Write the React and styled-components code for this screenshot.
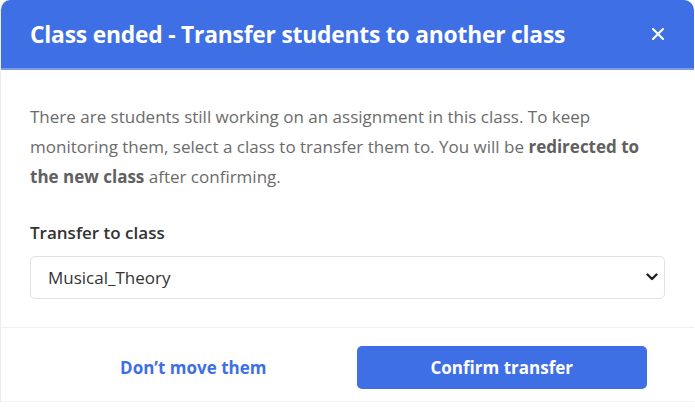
import styled, { createGlobalStyle } from "styled-components";

const GlobalStyle = createGlobalStyle`
  html, body {
    margin: 0;
    padding: 0;
    background: #ffffff;
  }
  body {
    font-family: "Open Sans", "Noto Sans", Arial, sans-serif;
  }
`;

const colors = {
  primary: "#3f6fe4",
  primaryLight: "#7b9cec",
  text: "#6b6b6b",
  dark: "#333333",
  border: "#e2e2e2",
  divider: "#efefef",
};

const Modal = styled.div`
  width: 693px;
  border-radius: 10px 10px 0 0;
  overflow: hidden;
  border-left: 1px solid #ececec;
  border-bottom: 1px solid #f4f4f4;
  background: #fff;
`;

const Header = styled.header`
  height: 68px;
  background: ${colors.primary};
  border-bottom: 2px solid ${colors.primaryLight};
  padding: 0 29px 0 29px;
  display: flex;
  align-items: center;
  justify-content: space-between;
`;

const Title = styled.h2`
  margin: 0;
  color: #fff;
  font-size: 22.8px;
  font-weight: 700;
  letter-spacing: -0.2px;
`;

const Close = styled.button`
  background: none;
  border: 0;
  padding: 0;
  width: 14px;
  height: 14px;
  display: flex;
  align-items: center;
  justify-content: center;
  cursor: pointer;
`;

const Body = styled.div`
  padding: 32px 29px 28px 29px;
`;

const Text = styled.p`
  margin: 0;
  font-size: 17px;
  line-height: 30px;
  color: ${colors.text};

  strong {
    font-weight: 700;
    color: #606060;
  }
`;

const Label = styled.label`
  display: block;
  margin-top: 29px;
  font-size: 17px;
  line-height: 24px;
  font-weight: 600;
  color: ${colors.dark};
`;

const SelectWrap = styled.div`
  position: relative;
  margin-top: 11px;
`;

const Select = styled.select`
  appearance: none;
  width: 100%;
  height: 43px;
  border: 1.5px solid ${colors.border};
  border-radius: 5px;
  background: #fff;
  padding: 0 30px 0 17px;
  font-family: "Open Sans", "Noto Sans", Arial, sans-serif;
  font-size: 17px;
  color: ${colors.dark};
  outline: none;
`;

const Chevron = styled.svg`
  position: absolute;
  right: 7px;
  top: 17px;
  pointer-events: none;
`;

const Footer = styled.footer`
  border-top: 1px solid ${colors.divider};
  padding: 18px 47px 12px 47px;
  display: grid;
  grid-template-columns: 1fr 1fr;
  gap: 18px;
`;

const Action = styled.button`
  height: 43px;
  border-radius: 5px;
  border: 0;
  font-family: "Open Sans", "Noto Sans", Arial, sans-serif;
  font-size: 17px;
  font-weight: 700;
  cursor: pointer;
  background: ${(props) => (props.primary ? colors.primary : "#fff")};
  color: ${(props) => (props.primary ? "#fff" : colors.primary)};
`;

export default function App() {
  return (
    <>
      <GlobalStyle />
      <Modal>
        <Header>
          <Title>Class ended - Transfer students to another class</Title>
          <Close aria-label="Close">
            <svg width="12" height="12" viewBox="0 0 12 12">
              <path
                d="M1 1 L11 11 M11 1 L1 11"
                stroke="#fff"
                strokeWidth="2"
                strokeLinecap="round"
              />
            </svg>
          </Close>
        </Header>
        <Body>
          <Text>
            There are students still working on an assignment in this class. To
            keep monitoring them, select a class to transfer them to. You will
            be <strong>redirected to the new class</strong> after confirming.
          </Text>
          <Label htmlFor="transfer">Transfer to class</Label>
          <SelectWrap>
            <Select id="transfer" defaultValue="Musical_Theory">
              <option>Musical_Theory</option>
            </Select>
            <Chevron width="12" height="8" viewBox="0 0 12 8">
              <path
                d="M1.5 1.5 L6 6 L10.5 1.5"
                fill="none"
                stroke="#222"
                strokeWidth="2.4"
                strokeLinecap="round"
                strokeLinejoin="round"
              />
            </Chevron>
          </SelectWrap>
        </Body>
        <Footer>
          <Action>Don’t move them</Action>
          <Action primary>Confirm transfer</Action>
        </Footer>
      </Modal>
    </>
  );
}
